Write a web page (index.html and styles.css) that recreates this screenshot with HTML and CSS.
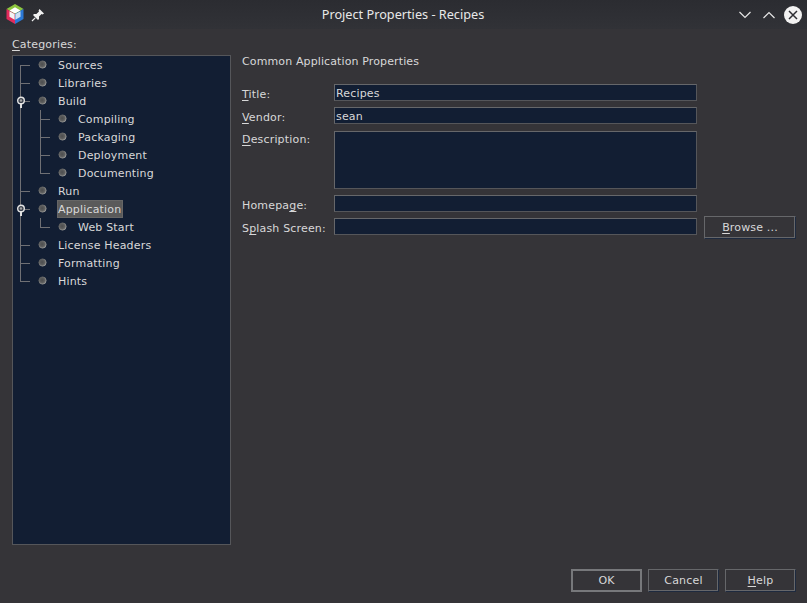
FILE: index.html
```html
<!DOCTYPE html>
<html>
  <head>
    <meta name="viewport" content="width=device-width, initial-scale=1">
    <link rel="stylesheet" href="styles.css">
  </head>
  <body>
    <svg class="defs" width="0" height="0">
      <defs>
        <radialGradient id="ball" cx="45%" cy="45%" r="55%">
          <stop offset="0" stop-color="#4c4d4e"/>
          <stop offset="0.6" stop-color="#5c5d5d"/>
          <stop offset="1" stop-color="#7c7c7a"/>
        </radialGradient>
        <linearGradient id="ballrim" x1="0" y1="0" x2="1" y2="1">
          <stop offset="0" stop-color="#4a4b4c"/>
          <stop offset="1" stop-color="#a8a8a5"/>
        </linearGradient>
        <symbol id="dot" viewBox="0 0 9 9"><circle cx="4.5" cy="4.5" r="3.6" fill="url(#ball)" stroke="url(#ballrim)" stroke-width="0.9"/></symbol>
        <symbol id="knob" viewBox="0 0 20 18">
          <rect x="7" y="11" width="2" height="5" fill="#dedede"/>
          <circle cx="8" cy="8.5" r="3.3" fill="#3a404c" stroke="#e4e4e4" stroke-width="1.4"/>
          <circle cx="8" cy="8.5" r="1.2" fill="#a4a4a4"/>
        </symbol>
      </defs>
    </svg>

    <div class="window">
      <header class="titlebar">
        <svg class="logo" width="20" height="22" viewBox="0 0 20 22">
          <path d="M10 1 L18.5 6 L10 11 L1.5 6 Z" fill="#8dc63f"/>
          <path d="M18.5 6 V16 L10 21 V11 Z" fill="#2b79d6"/>
          <path d="M1.5 6 V16 L10 21 V11 Z" fill="#e22b5c"/>
          <path d="M10 4.2 L15.5 7.4 L10 10.6 L4.5 7.4 Z" fill="#ffffff"/>
          <path d="M15.5 8.2 V13.8 L10.4 16.8 V11 Z" fill="#cfe0f2"/>
          <path d="M4.5 8.2 V13.8 L9.6 16.8 V11 Z" fill="#f3f3f3"/>
        </svg>
        <svg class="pin" width="14" height="14" viewBox="0 0 14 14">
          <path d="M8.5 1 L13 5.5 L11.6 6.4 L10.6 6 L8 8.6 L8 11 L7 12 L2 7 L3 6 L5.4 6 L8 3.4 L7.6 2.4 Z" fill="#f2f2f2"/>
          <path d="M4.2 9.8 L1 13" stroke="#f2f2f2" stroke-width="1.2"/>
        </svg>
        <div class="wintitle">Project Properties - Recipes</div>
        <svg class="winbtn" width="14" height="10" viewBox="0 0 14 10"><path d="M1.5 2 L7 7.5 L12.5 2" fill="none" stroke="#e6e6e6" stroke-width="1.2"/></svg>
        <svg class="winbtn" width="14" height="10" viewBox="0 0 14 10"><path d="M1.5 8 L7 2.5 L12.5 8" fill="none" stroke="#e6e6e6" stroke-width="1.2"/></svg>
        <svg class="closebtn" width="18" height="18" viewBox="0 0 18 18">
          <circle cx="9" cy="9" r="9" fill="#f2f2f2"/>
          <path d="M5 5 L13 13 M13 5 L5 13" stroke="#2c2d32" stroke-width="1.5"/>
        </svg>
      </header>

      <div class="content">
        <div class="main">
          <aside class="categories">
            <div class="cat-label"><u>C</u>ategories:</div>
            <div class="tree">
              <div class="row first"><span class="guide tee"></span><svg class="dot"><use href="#dot"/></svg><span class="node">Sources</span></div>
              <div class="row"><span class="guide tee"></span><svg class="dot"><use href="#dot"/></svg><span class="node">Libraries</span></div>
              <div class="row"><span class="guide tee"><svg class="knob"><use href="#knob"/></svg></span><svg class="dot"><use href="#dot"/></svg><span class="node">Build</span></div>
              <div class="row"><span class="guide pass"></span><span class="guide tee"></span><svg class="dot"><use href="#dot"/></svg><span class="node">Compiling</span></div>
              <div class="row"><span class="guide pass"></span><span class="guide tee"></span><svg class="dot"><use href="#dot"/></svg><span class="node">Packaging</span></div>
              <div class="row"><span class="guide pass"></span><span class="guide tee"></span><svg class="dot"><use href="#dot"/></svg><span class="node">Deployment</span></div>
              <div class="row"><span class="guide pass"></span><span class="guide last"></span><svg class="dot"><use href="#dot"/></svg><span class="node">Documenting</span></div>
              <div class="row"><span class="guide tee"></span><svg class="dot"><use href="#dot"/></svg><span class="node">Run</span></div>
              <div class="row"><span class="guide tee"><svg class="knob"><use href="#knob"/></svg></span><svg class="dot"><use href="#dot"/></svg><span class="node selected">Application</span></div>
              <div class="row"><span class="guide pass"></span><span class="guide last"></span><svg class="dot"><use href="#dot"/></svg><span class="node">Web Start</span></div>
              <div class="row"><span class="guide tee"></span><svg class="dot"><use href="#dot"/></svg><span class="node">License Headers</span></div>
              <div class="row"><span class="guide tee"></span><svg class="dot"><use href="#dot"/></svg><span class="node">Formatting</span></div>
              <div class="row"><span class="guide last"></span><svg class="dot"><use href="#dot"/></svg><span class="node">Hints</span></div>
            </div>
          </aside>

          <section class="panel">
            <div class="panel-title">Common Application Properties</div>
            <div class="form">
              <label><u>T</u>itle:</label>
              <div class="field">Recipes</div>
              <label><u>V</u>endor:</label>
              <div class="field">sean</div>
              <label class="top"><u>D</u>escription:</label>
              <div class="field area"></div>
              <label>Homepa<u>g</u>e:</label>
              <div class="field"></div>
              <label>S<u>p</u>lash Screen:</label>
              <div class="field-row">
                <div class="field"></div>
                <button class="btn browse"><u>B</u>rowse ...</button>
              </div>
            </div>
          </section>
        </div>

        <footer class="actions">
          <button class="btn default">OK</button>
          <button class="btn">Cancel</button>
          <button class="btn"><u>H</u>elp</button>
        </footer>
      </div>
    </div>
  </body>
</html>
```

FILE: styles.css
```css
/* Page */
html, body {
  margin: 0;
  padding: 0;
}

body {
  width: 807px;
  height: 603px;
  overflow: hidden;
  background-color: #353438;
  color: #d8d8d8;
  font-family: "DejaVu Sans", sans-serif;
  font-size: 11px;
  letter-spacing: 0.17px;
}

.defs {
  display: block;
  height: 0;
}

u {
  text-underline-offset: 2px;
}

.window {
  display: flex;
  flex-direction: column;
  height: 603px;
}

/* Title bar */
.titlebar {
  display: flex;
  align-items: center;
  height: 29px;
  box-sizing: border-box;
  padding: 0 5px 0 4px;
  background: linear-gradient(#2b2c31, #313237);
}

.logo {
  margin: 0 6px 2px 1px;
}

.wintitle {
  flex: 1;
  text-align: center;
  margin-left: 23px;
  padding-bottom: 2px;
  font-family: "Noto Sans", sans-serif;
  font-size: 12.7px;
  letter-spacing: 0;
  color: #e8e8e8;
}

.winbtn {
  margin-right: 10px;
}

.closebtn {
  margin-left: -2px;
}

/* Layout */
.content {
  flex: 1;
  display: flex;
  flex-direction: column;
  padding: 9px 11px 11px 12px;
}

.main {
  flex: 1;
  display: flex;
}

/* Tree */
.categories {
  width: 219px;
  margin-right: 11px;
  display: flex;
  flex-direction: column;
}

.cat-label {
  height: 17px;
  line-height: 13px;
}

.tree {
  height: 490px;
  box-sizing: border-box;
  background-color: #121e33;
  border: 1px solid #55565a;
}

.row {
  display: flex;
  align-items: center;
  height: 18px;
}

.guide {
  display: block;
  flex: none;
  position: relative;
  width: 20px;
  height: 18px;
}

/* lines of the tree */
.guide.tee:before,
.guide.pass:before,
.guide.last:before {
  content: "";
  position: absolute;
  left: 7px;
  top: 0;
  height: 18px;
  border-left: 1px solid #6f7074;
}

.guide.last:before {
  height: 9px;
}

.first .guide.tee:before {
  top: 9px;
  height: 9px;
}

.guide.tee:after,
.guide.last:after {
  content: "";
  position: absolute;
  left: 7px;
  top: 9px;
  width: 10px;
  border-top: 1px solid #6f7074;
}

.knob {
  position: absolute;
  left: 0;
  top: 0;
  width: 20px;
  height: 18px;
  z-index: 1;
}

.dot {
  flex: none;
  width: 9px;
  height: 9px;
  margin: -1px 10px 0 5px;
}

.node {
  box-sizing: border-box;
  height: 18px;
  padding: 1px 2px 0 1px;
  line-height: 17px;
}

.node.selected {
  background-color: #5a5a5a;
  box-shadow: inset 0 0 0 1px #666666;
}

/* Right panel */
.panel {
  flex: 1;
}

.panel-title {
  height: 20px;
  line-height: 13px;
  letter-spacing: 0.12px;
  padding-top: 17px;
  margin-bottom: 9px;
}

.form {
  display: grid;
  grid-template-columns: 92px 363px;
  row-gap: 6px;
  align-items: center;
}

.form label {
  line-height: 13px;
  padding-top: 4px;
}

.form label.top {
  align-self: start;
  padding-top: 3px;
}

.field {
  box-sizing: border-box;
  width: 363px;
  height: 17px;
  line-height: 17px;
  padding-left: 1px;
  background-color: #121e33;
  border: 1px solid #66676a;
  border-right-color: #55565a;
  border-bottom-color: #55565a;
}

.field.area {
  height: 58px;
  margin-top: 1px;
}

.field-row {
  display: flex;
  align-items: center;
  height: 17px;
}

.field-row .field {
  flex: none;
}

/* Buttons */
.btn {
  box-sizing: border-box;
  width: 71px;
  height: 23px;
  padding: 0;
  background-color: #353438;
  border: 1px solid #66676a;
  border-right-color: #1e2a3f;
  border-bottom-color: #1e2a3f;
  box-shadow: inset -1px -1px 0 #66676a;
  color: #d8d8d8;
  font-family: "DejaVu Sans", sans-serif;
  font-size: 11px;
  letter-spacing: 0.17px;
}

.browse {
  flex: none;
  width: 92px;
  margin-left: 7px;
  margin-top: 2px;
}

.btn.default {
  border: 2px solid #77787b;
  box-shadow: none;
}

.actions {
  display: flex;
  justify-content: flex-end;
  gap: 6px;
}
```
